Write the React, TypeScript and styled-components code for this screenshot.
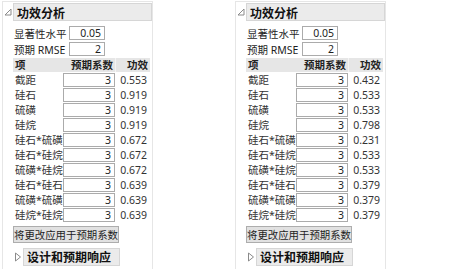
import React from 'react';
import styled, { createGlobalStyle } from 'styled-components';

const GlobalStyle = createGlobalStyle`
  body {
    margin: 0;
    background: #ffffff;
    font-family: "Noto Sans", "Noto Sans CJK SC", sans-serif;
    color: #1e1e1e;
  }
`;

const Page = styled.div`
  display: flex;
  gap: 82px;
  padding: 1px 0 0 2px;
`;

const Panel = styled.div`
  width: 151px;
  height: 268px;
  box-sizing: border-box;
  border: 1px solid #e6e6e6;
  border-bottom: none;
  padding-top: 1px;
`;

const TitleRow = styled.div`
  display: flex;
  align-items: center;
  height: 18px;
`;

const Twisty = styled.div`
  width: 10px;
  height: 18px;
  display: flex;
  align-items: center;
  justify-content: center;
  flex-shrink: 0;
`;

const TitleBox = styled.div<{ $w?: number }>`
  flex: ${(p) => (p.$w ? '0 0 auto' : '1')};
  width: ${(p) => (p.$w ? `${p.$w}px` : 'auto')};
  height: 18px;
  box-sizing: border-box;
  background: #ebebeb;
  border: 1px solid #d6d6d6;
  display: flex;
  align-items: center;
  padding-left: 3px;
  font-family: "Noto Sans CJK SC", sans-serif;
  font-weight: 700;
  font-size: 12px;
  color: #111;
`;

const Body = styled.div`
  padding-left: 10px;
  padding-right: 1px;
`;

const ParamRow = styled.div<{ $mt: number }>`
  display: flex;
  align-items: center;
  height: 14px;
  margin-top: ${(p) => p.$mt}px;
`;

const ParamLabel = styled.div`
  width: 55px;
  padding-left: 1px;
  font-size: 10.5px;
  white-space: nowrap;
`;

const Field = styled.input<{ $w: number }>`
  width: ${(p) => p.$w}px;
  height: 14px;
  box-sizing: border-box;
  border: 1px solid #ababab;
  background: #fff;
  padding: 0 3px 0 0;
  margin: 0;
  text-align: right;
  font-family: "Noto Sans", sans-serif;
  font-size: 10.5px;
  color: #1e1e1e;
  outline: none;
`;

const Table = styled.div`
  margin-top: 2px;
  width: 137px;
`;

const Grid = styled.div`
  display: grid;
  grid-template-columns: 50px 52px 35px;
  align-items: center;
`;

const HeadRow = styled(Grid)`
  height: 14px;
  background: #e6e6e6;
  font-family: "Noto Sans CJK SC", sans-serif;
  font-weight: 700;
  font-size: 10.5px;
  color: #222;
`;

const HeadCell = styled.div<{ $right?: boolean; $sep?: boolean }>`
  text-align: ${(p) => (p.$right ? 'right' : 'left')};
  padding: ${(p) => (p.$right ? '0 2px 0 0' : '0 0 0 2px')};
  border-left: ${(p) => (p.$sep ? '1px solid #f4f4f4' : 'none')};
  line-height: 14px;
`;

const DataRow = styled(Grid)`
  height: 15px;
  font-size: 10.5px;
`;

const Name = styled.div`
  padding-left: 2px;
  white-space: nowrap;
  color: #333;
`;

const Power = styled.div`
  text-align: right;
  padding-right: 3px;
  color: #333;
`;

const ApplyButton = styled.button`
  margin-top: 4px;
  height: 17px;
  width: 106px;
  box-sizing: border-box;
  padding: 0;
  border: 1px solid #adadad;
  background: #e1e1e1;
  font-family: "Noto Sans CJK SC", sans-serif;
  font-size: 10.4px;
  color: #1e1e1e;
  white-space: nowrap;
  letter-spacing: 0;
  display: flex;
  align-items: center;
  justify-content: center;
`;

const SubRow = styled.div`
  display: flex;
  align-items: center;
  margin-top: 5px;
  margin-left: 10px;
  height: 17px;
`;

const OpenIcon = () => (
  <svg width="8" height="8" viewBox="0 0 8 8">
    <polygon points="7,1 7,7 1,7" fill="none" stroke="#8a8a8a" strokeWidth="1" />
  </svg>
);

const ClosedIcon = () => (
  <svg width="8" height="10" viewBox="0 0 8 10">
    <polygon points="1.5,1 6.5,5 1.5,9" fill="none" stroke="#8a8a8a" strokeWidth="1" />
  </svg>
);

type Term = { name: string; power: string };

const PowerPanel = ({ terms }: { terms: Term[] }) => (
  <Panel>
    <TitleRow>
      <Twisty>
        <OpenIcon />
      </Twisty>
      <TitleBox>功效分析</TitleBox>
    </TitleRow>
    <Body>
      <ParamRow $mt={5}>
        <ParamLabel>显著性水平</ParamLabel>
        <Field $w={36} readOnly value="0.05" />
      </ParamRow>
      <ParamRow $mt={2}>
        <ParamLabel>预期 RMSE</ParamLabel>
        <Field $w={36} readOnly value="2" />
      </ParamRow>
      <Table>
        <HeadRow>
          <HeadCell>项</HeadCell>
          <HeadCell $right>预期系数</HeadCell>
          <HeadCell $right $sep>功效</HeadCell>
        </HeadRow>
        {terms.map((t) => (
          <DataRow key={t.name}>
            <Name>{t.name}</Name>
            <Field $w={52} readOnly value="3" />
            <Power>{t.power}</Power>
          </DataRow>
        ))}
      </Table>
      <ApplyButton>将更改应用于预期系数</ApplyButton>
    </Body>
    <SubRow>
      <Twisty>
        <ClosedIcon />
      </Twisty>
      <TitleBox $w={97}>设计和预期响应</TitleBox>
    </SubRow>
  </Panel>
);

const names = ['截距', '硅石', '硫磺', '硅烷', '硅石*硫磺', '硅石*硅烷', '硫磺*硅烷', '硅石*硅石', '硫磺*硫磺', '硅烷*硅烷'];
const leftPower = ['0.553', '0.919', '0.919', '0.919', '0.672', '0.672', '0.672', '0.639', '0.639', '0.639'];
const rightPower = ['0.432', '0.533', '0.533', '0.798', '0.231', '0.533', '0.533', '0.379', '0.379', '0.379'];

export default function App() {
  return (
    <>
      <GlobalStyle />
      <Page>
        <PowerPanel terms={names.map((n, i) => ({ name: n, power: leftPower[i] }))} />
        <PowerPanel terms={names.map((n, i) => ({ name: n, power: rightPower[i] }))} />
      </Page>
    </>
  );
}
